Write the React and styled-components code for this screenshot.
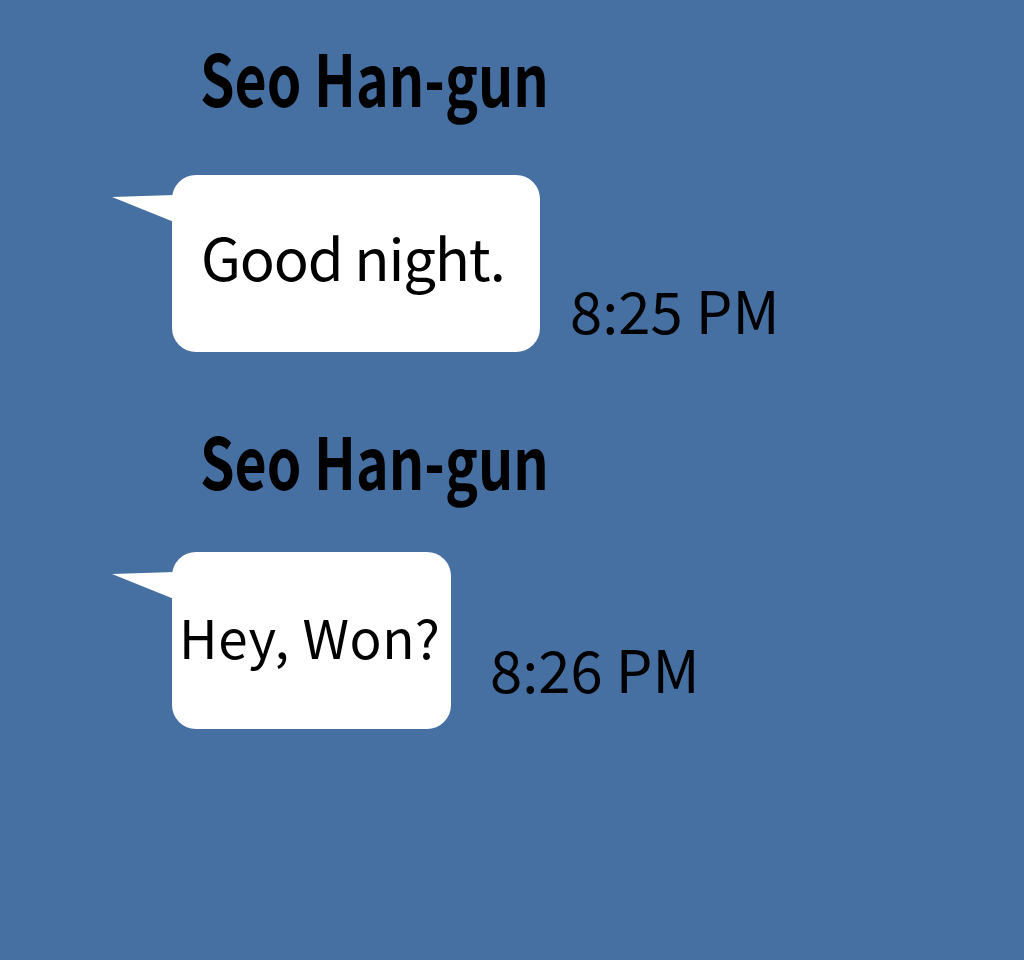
import React from "react";
import styled, { createGlobalStyle } from "styled-components";

const Global = createGlobalStyle`
  html, body { margin: 0; padding: 0; background: #466fa2; }
  body { font-family: "Noto Sans CJK KR", "Noto Sans", sans-serif; color: #000; }
`;

const Page = styled.div`
  width: 1024px;
  height: 960px;
  background: #466fa2;
  display: flex;
  flex-direction: column;
  padding: 40px 0 0 172px;
  box-sizing: border-box;
`;

const Message = styled.section`
  display: flex;
  flex-direction: column;
  margin-bottom: ${(p) => p.$gap || 0}px;
`;

const Name = styled.h2`
  margin: 0 0 0 28px;
  font-size: 72px;
  font-weight: 700;
  line-height: 72px;
  height: 72px;
  white-space: nowrap;
  transform: scaleX(0.77);
  transform-origin: left center;
`;

const Row = styled.div`
  display: flex;
  align-items: flex-end;
  margin-top: ${(p) => p.$top}px;
`;

const Bubble = styled.div`
  position: relative;
  width: ${(p) => p.$width}px;
  height: 177px;
  box-sizing: border-box;
  padding-left: ${(p) => p.$pad}px;
  padding-bottom: ${(p) => p.$shift}px;
  background: #fff;
  border-radius: 24px;
  display: flex;
  align-items: center;
  font-size: ${(p) => p.$size}px;
  letter-spacing: ${(p) => p.$track || 0}px;
  line-height: 1;
  white-space: nowrap;

  &::before {
    content: "";
    position: absolute;
    left: -60px;
    top: 20px;
    width: 62px;
    height: 27px;
    background: #fff;
    clip-path: polygon(0 2px, 100% 0, 100% 100%);
  }
`;

const Time = styled.span`
  margin-left: ${(p) => p.$gap}px;
  margin-bottom: ${(p) => p.$lift}px;
  font-size: 58px;
  line-height: 1;
  white-space: nowrap;
`;

export default function App() {
  return (
    <>
      <Global />
      <Page>
        <Message $gap={71}>
          <Name>Seo Han-gun</Name>
          <Row $top={63}>
            <Bubble $width={368} $pad={29} $shift={16} $size={58} $track={-1.2}>
              Good night.
            </Bubble>
            <Time $gap={30} $lift={14}>8:25 PM</Time>
          </Row>
        </Message>
        <Message>
          <Name>Seo Han-gun</Name>
          <Row $top={57}>
            <Bubble $width={279} $pad={7} $shift={8} $size={53} $track={0.6}>
              Hey, Won?
            </Bubble>
            <Time $gap={39} $lift={32}>8:26 PM</Time>
          </Row>
        </Message>
      </Page>
    </>
  );
}
